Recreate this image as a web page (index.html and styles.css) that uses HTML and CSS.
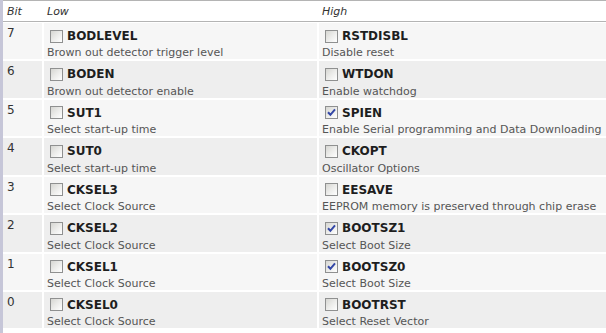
FILE: index.html
```html
<!DOCTYPE html>
<html>
<head>
<meta charset="utf-8">
<link rel="stylesheet" href="styles.css">
</head>
<body>
<div class="page">
<table class="fuses">
  <colgroup><col class="c-bit"><col class="c-low"><col class="c-high"></colgroup>
  <thead>
    <tr><th>Bit</th><th>Low</th><th>High</th></tr>
  </thead>
  <tbody>
    <tr class="odd">
      <td class="bit">7</td>
      <td><div class="name"><span class="cb"></span>BODLEVEL</div><div class="desc">Brown out detector trigger level</div></td>
      <td><div class="name"><span class="cb"></span>RSTDISBL</div><div class="desc">Disable reset</div></td>
    </tr>
    <tr class="even">
      <td class="bit">6</td>
      <td><div class="name"><span class="cb"></span>BODEN</div><div class="desc">Brown out detector enable</div></td>
      <td><div class="name"><span class="cb"></span>WTDON</div><div class="desc">Enable watchdog</div></td>
    </tr>
    <tr class="odd">
      <td class="bit">5</td>
      <td><div class="name"><span class="cb"></span>SUT1</div><div class="desc">Select start-up time</div></td>
      <td><div class="name"><span class="cb on"><svg viewBox="0 0 11 11" width="11" height="11"><path d="M2 5.2 L4.4 7.8 L9 2.4" fill="none" stroke="#3347a6" stroke-width="2"/></svg></span>SPIEN</div><div class="desc">Enable Serial programming and Data Downloading</div></td>
    </tr>
    <tr class="even">
      <td class="bit">4</td>
      <td><div class="name"><span class="cb"></span>SUT0</div><div class="desc">Select start-up time</div></td>
      <td><div class="name"><span class="cb"></span>CKOPT</div><div class="desc">Oscillator Options</div></td>
    </tr>
    <tr class="odd">
      <td class="bit">3</td>
      <td><div class="name"><span class="cb"></span>CKSEL3</div><div class="desc">Select Clock Source</div></td>
      <td><div class="name"><span class="cb"></span>EESAVE</div><div class="desc">EEPROM memory is preserved through chip erase</div></td>
    </tr>
    <tr class="even">
      <td class="bit">2</td>
      <td><div class="name"><span class="cb"></span>CKSEL2</div><div class="desc">Select Clock Source</div></td>
      <td><div class="name"><span class="cb on"><svg viewBox="0 0 11 11" width="11" height="11"><path d="M2 5.2 L4.4 7.8 L9 2.4" fill="none" stroke="#3347a6" stroke-width="2"/></svg></span>BOOTSZ1</div><div class="desc">Select Boot Size</div></td>
    </tr>
    <tr class="odd">
      <td class="bit">1</td>
      <td><div class="name"><span class="cb"></span>CKSEL1</div><div class="desc">Select Clock Source</div></td>
      <td><div class="name"><span class="cb on"><svg viewBox="0 0 11 11" width="11" height="11"><path d="M2 5.2 L4.4 7.8 L9 2.4" fill="none" stroke="#3347a6" stroke-width="2"/></svg></span>BOOTSZ0</div><div class="desc">Select Boot Size</div></td>
    </tr>
    <tr class="even">
      <td class="bit">0</td>
      <td><div class="name"><span class="cb"></span>CKSEL0</div><div class="desc">Select Clock Source</div></td>
      <td><div class="name"><span class="cb"></span>BOOTRST</div><div class="desc">Select Reset Vector</div></td>
    </tr>
  </tbody>
</table>
</div>
</body>
</html>
```
FILE: styles.css
```css
html, body {
  margin: 0;
  padding: 0;
  background: #fff;
  overflow: hidden;
}
.page {
  border-left: 3px solid #c6c6d8;
  width: 603px;
  min-height: 333px;
  font-family: "DejaVu Sans", Verdana, sans-serif;
  color: #222;
}
.fuses {
  border-collapse: separate;
  border-spacing: 0;
  table-layout: fixed;
  width: 603px;
}
.c-bit { width: 41px; }
.c-low { width: 275px; }
.c-high { width: 287px; }
.fuses th {
  height: 20px;
  padding: 0 3px;
  text-align: left;
  font-weight: normal;
  font-style: italic;
  font-size: 11px;
  color: #333;
  border-top: 1px solid #b4b4b4;
  border-bottom: 1px solid #b4b4b4;
  vertical-align: middle;
}
.fuses th:first-child { padding-left: 4px; }
.fuses td {
  vertical-align: top;
  padding: 5px 3px 0;
  border-right: 2px solid #fff;
  border-bottom: 2px solid #fff;
}
.fuses td:last-child { border-right: 0; }
.fuses tbody tr:first-child td { border-top: 1px solid #fff; }
.odd td { background: #f6f6f6; }
.even td { background: #eeeeee; }
.fuses td.bit {
  padding-top: 3px;
  padding-left: 4px;
  font-size: 12px;
  line-height: 14px;
  color: #333;
}
.name {
  height: 16px;
  line-height: 16px;
  font-size: 12px;
  font-weight: bold;
  color: #1e1e1e;
  display: flex;
  align-items: center;
}
.cb {
  box-sizing: border-box;
  width: 13px;
  height: 13px;
  margin: 0 4px 0 3px;
  border: 1px solid #8f9090;
  background: linear-gradient(135deg, #d6d6d2 0%, #ececea 50%, #ffffff 100%);
  display: inline-flex;
  align-items: center;
  justify-content: center;
  flex: none;
}
.cb svg { display: block; }
.desc {
  margin-top: 2.43px;
  height: 13px;
  font-size: 11px;
  line-height: 13px;
  color: #555;
  white-space: nowrap;
}
```
